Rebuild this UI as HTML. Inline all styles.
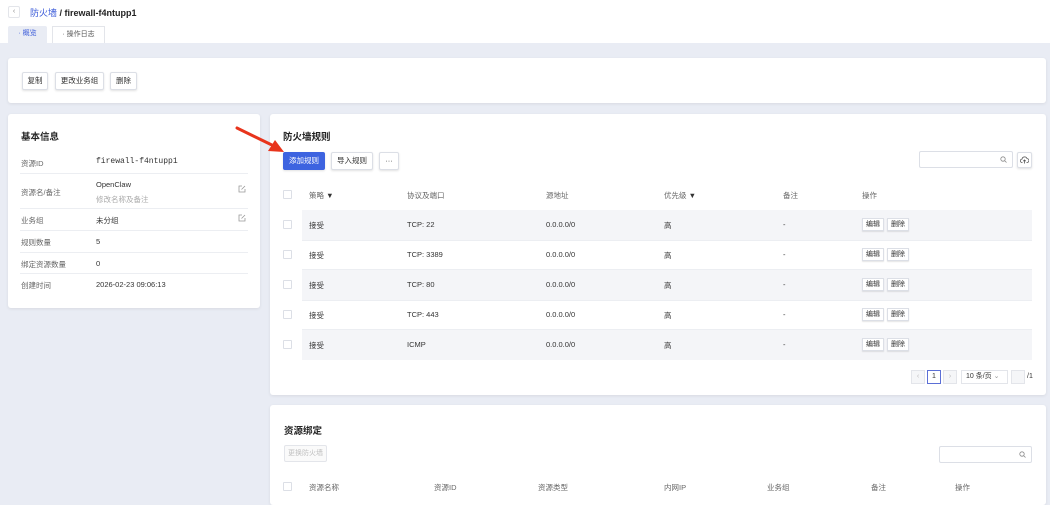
<!DOCTYPE html>
<html><head><meta charset="utf-8"><style>
*{box-sizing:border-box;margin:0;padding:0}
body{width:1050px;height:500px;overflow:hidden;background:#e9ecf4;font-family:"Liberation Sans","Noto Sans CJK SC",sans-serif;font-size:7.5px;color:#333;position:relative}
.a{position:absolute}
.card{position:absolute;background:#fff;border-radius:3px;box-shadow:0 1px 3px rgba(0,0,0,.08)}
.btn{position:absolute;height:18px;border:1px solid #dcdfe6;background:#fff;border-radius:2px;font-size:7.5px;line-height:16px;text-align:center;box-shadow:0 1px 2px rgba(0,0,0,.12);color:#333}
.t{position:absolute;white-space:nowrap}
.cb{position:absolute;width:9px;height:9px;border:1px solid #dcdfe6;background:#fff;border-radius:1px}
.row{position:absolute;left:302px;width:730px;height:30px}
.g{background:#f4f5f8}
.sm{position:absolute;height:13px;padding:0 3px;border:1px solid #dcdfe6;background:#fff;font-size:7px;line-height:11px;box-shadow:0 1px 1px rgba(0,0,0,.1)}
.lbl{color:#666}
.hr{position:absolute;left:20px;width:228px;height:1px;background:#eceef2}
</style></head><body>
<div class="a" style="left:0;top:0;width:1050px;height:43px;background:#fff"></div>
<div class="a" style="left:8px;top:6px;width:12px;height:12px;border:1px solid #e3e5ea;border-radius:2px;font-size:7px;line-height:10px;text-align:center;color:#888">‹</div>
<div class="t" style="left:30px;top:6px;font-size:9px"><span style="color:#3b5bd9">防火墙</span> <b style="color:#222">/ firewall-f4ntupp1</b></div>
<div class="a" style="left:8px;top:26px;width:39px;height:17px;background:#e9ecf4;border-radius:2px 2px 0 0;font-size:7px;line-height:16px;text-align:center;color:#3b5bd9">· 概览</div>
<div class="a" style="left:52px;top:26px;width:53px;height:17px;background:#fff;border:1px solid #e3e5ea;border-bottom:none;font-size:7px;line-height:15px;text-align:center;color:#555">· 操作日志</div>

<div class="card" style="left:8px;top:58px;width:1038px;height:45px"></div>
<div class="btn" style="left:22px;top:72px;width:26px">复制</div>
<div class="btn" style="left:55px;top:72px;width:49px">更改业务组</div>
<div class="btn" style="left:110px;top:72px;width:27px">删除</div>

<div class="card" style="left:8px;top:114px;width:252px;height:194px"></div>
<div class="t" style="left:21px;top:129px;font-size:9.5px;font-weight:bold;color:#222">基本信息</div>
<div class="t lbl" style="left:21px;top:158px">资源ID</div><div class="t" style="left:96px;top:157px;font-family:'Liberation Mono',monospace;font-size:8px">firewall-f4ntupp1</div>
<div class="hr" style="top:173px"></div>
<div class="t lbl" style="left:21px;top:187px">资源名/备注</div><div class="t" style="left:96px;top:180px">OpenClaw</div><div class="t" style="left:96px;top:194px;color:#aaa">修改名称及备注</div>
<svg class="a" style="left:238px;top:185px" width="8" height="8" viewBox="0 0 8 8"><path d="M4 1H1v6h6V4M3.5 4.5L7 1" fill="none" stroke="#999" stroke-width=".8"/></svg>
<div class="hr" style="top:208px"></div>
<div class="t lbl" style="left:21px;top:215px">业务组</div><div class="t" style="left:96px;top:215px">未分组</div>
<svg class="a" style="left:238px;top:214px" width="8" height="8" viewBox="0 0 8 8"><path d="M4 1H1v6h6V4M3.5 4.5L7 1" fill="none" stroke="#999" stroke-width=".8"/></svg>
<div class="hr" style="top:230px"></div>
<div class="t lbl" style="left:21px;top:237px">规则数量</div><div class="t" style="left:96px;top:237px">5</div>
<div class="hr" style="top:252px"></div>
<div class="t lbl" style="left:21px;top:259px">绑定资源数量</div><div class="t" style="left:96px;top:259px">0</div>
<div class="hr" style="top:273px"></div>
<div class="t lbl" style="left:21px;top:280px">创建时间</div><div class="t" style="left:96px;top:280px">2026-02-23 09:06:13</div>

<div class="card" style="left:270px;top:114px;width:776px;height:281px"></div>
<div class="t" style="left:283px;top:129px;font-size:9.5px;font-weight:bold;color:#222">防火墙规则</div>
<div class="btn" style="left:283px;top:152px;width:42px;background:#3d63e0;border-color:#3d63e0;color:#fff">添加规则</div>
<div class="btn" style="left:331px;top:152px;width:42px">导入规则</div>
<div class="btn" style="left:379px;top:152px;width:20px">···</div>
<div class="a" style="left:919px;top:151px;width:94px;height:17px;border:1px solid #dcdfe6;border-radius:2px"></div>
<svg class="a" style="left:1000px;top:156px" width="7" height="7" viewBox="0 0 7 7"><circle cx="3" cy="3" r="2.2" fill="none" stroke="#888" stroke-width=".8"/><path d="M4.6 4.6L6.5 6.5" stroke="#888" stroke-width=".8"/></svg>
<div class="btn" style="left:1017px;top:152px;width:15px;height:16px"></div>
<svg class="a" style="left:1020px;top:156px" width="9" height="8" viewBox="0 0 9 8"><path d="M2.5 6.5H2a1.7 1.7 0 010-3.4A2.6 2.6 0 017 2.6a1.9 1.9 0 010 3.9h-.5M4.5 7.5V4M3.3 5.2L4.5 4l1.2 1.2" fill="none" stroke="#555" stroke-width=".8"/></svg>

<div class="cb" style="left:283px;top:190px"></div>
<div class="t lbl" style="left:309px;top:190px">策略 <b style="color:#333">▼</b></div>
<div class="t lbl" style="left:407px;top:190px">协议及端口</div>
<div class="t lbl" style="left:546px;top:190px">源地址</div>
<div class="t lbl" style="left:664px;top:190px">优先级 <b style="color:#333">▼</b></div>
<div class="t lbl" style="left:783px;top:190px">备注</div>
<div class="t lbl" style="left:862px;top:190px">操作</div>

<div class="row g" style="top:210px"></div>
<div class="row" style="top:240px;border-top:1px solid #eceef2;border-bottom:1px solid #eceef2"></div>
<div class="row g" style="top:270px"></div>
<div class="row" style="top:300px;border-top:1px solid #eceef2;border-bottom:1px solid #eceef2"></div>
<div class="row g" style="top:330px"></div>

<div class="cb" style="left:283px;top:220px"></div><div class="t" style="left:309px;top:220px">接受</div><div class="t" style="left:407px;top:220px">TCP: 22</div><div class="t" style="left:546px;top:220px">0.0.0.0/0</div><div class="t" style="left:664px;top:220px">高</div><div class="t" style="left:783px;top:220px">-</div><div class="sm" style="left:862px;top:218px">编辑</div><div class="sm" style="left:887px;top:218px">删除</div>
<div class="cb" style="left:283px;top:250px"></div><div class="t" style="left:309px;top:250px">接受</div><div class="t" style="left:407px;top:250px">TCP: 3389</div><div class="t" style="left:546px;top:250px">0.0.0.0/0</div><div class="t" style="left:664px;top:250px">高</div><div class="t" style="left:783px;top:250px">-</div><div class="sm" style="left:862px;top:248px">编辑</div><div class="sm" style="left:887px;top:248px">删除</div>
<div class="cb" style="left:283px;top:280px"></div><div class="t" style="left:309px;top:280px">接受</div><div class="t" style="left:407px;top:280px">TCP: 80</div><div class="t" style="left:546px;top:280px">0.0.0.0/0</div><div class="t" style="left:664px;top:280px">高</div><div class="t" style="left:783px;top:280px">-</div><div class="sm" style="left:862px;top:278px">编辑</div><div class="sm" style="left:887px;top:278px">删除</div>
<div class="cb" style="left:283px;top:310px"></div><div class="t" style="left:309px;top:310px">接受</div><div class="t" style="left:407px;top:310px">TCP: 443</div><div class="t" style="left:546px;top:310px">0.0.0.0/0</div><div class="t" style="left:664px;top:310px">高</div><div class="t" style="left:783px;top:310px">-</div><div class="sm" style="left:862px;top:308px">编辑</div><div class="sm" style="left:887px;top:308px">删除</div>
<div class="cb" style="left:283px;top:340px"></div><div class="t" style="left:309px;top:340px">接受</div><div class="t" style="left:407px;top:340px">ICMP</div><div class="t" style="left:546px;top:340px">0.0.0.0/0</div><div class="t" style="left:664px;top:340px">高</div><div class="t" style="left:783px;top:340px">-</div><div class="sm" style="left:862px;top:338px">编辑</div><div class="sm" style="left:887px;top:338px">删除</div>

<div class="a" style="left:911px;top:370px;width:14px;height:14px;border:1px solid #e3e5ea;background:#f5f6f8;font-size:7px;line-height:12px;text-align:center;color:#bbb">‹</div>
<div class="a" style="left:927px;top:370px;width:14px;height:14px;border:1px solid #5b6fd6;font-size:7px;line-height:12px;text-align:center">1</div>
<div class="a" style="left:943px;top:370px;width:14px;height:14px;border:1px solid #e3e5ea;background:#f5f6f8;font-size:7px;line-height:12px;text-align:center;color:#bbb">›</div>
<div class="a" style="left:961px;top:370px;width:47px;height:14px;border:1px solid #e3e5ea;font-size:7px;line-height:12px;padding-left:4px">10 条/页 <span style="color:#999">⌄</span></div>
<div class="a" style="left:1011px;top:370px;width:14px;height:14px;border:1px solid #e3e5ea;background:#f5f6f8"></div>
<div class="t" style="left:1027px;top:373px;font-size:7px">/1</div>

<div class="card" style="left:270px;top:405px;width:776px;height:100px"></div>
<div class="t" style="left:284px;top:423px;font-size:9.5px;font-weight:bold;color:#222">资源绑定</div>
<div class="a" style="left:284px;top:445px;width:43px;height:17px;border:1px solid #e3e5ea;border-radius:2px;background:#fafafa;color:#c0c0c0;font-size:7px;line-height:15px;text-align:center">更换防火墙</div>
<div class="a" style="left:939px;top:446px;width:93px;height:17px;border:1px solid #dcdfe6;border-radius:2px"></div>
<svg class="a" style="left:1019px;top:451px" width="7" height="7" viewBox="0 0 7 7"><circle cx="3" cy="3" r="2.2" fill="none" stroke="#888" stroke-width=".8"/><path d="M4.6 4.6L6.5 6.5" stroke="#888" stroke-width=".8"/></svg>
<div class="cb" style="left:283px;top:482px"></div>
<div class="t lbl" style="left:309px;top:482px">资源名称</div>
<div class="t lbl" style="left:434px;top:482px">资源ID</div>
<div class="t lbl" style="left:538px;top:482px">资源类型</div>
<div class="t lbl" style="left:664px;top:482px">内网IP</div>
<div class="t lbl" style="left:767px;top:482px">业务组</div>
<div class="t lbl" style="left:871px;top:482px">备注</div>
<div class="t lbl" style="left:955px;top:482px">操作</div>

<svg class="a" style="left:230px;top:120px" width="60" height="40"><line x1="7" y1="8" x2="46" y2="27" stroke="#e8341c" stroke-width="3" stroke-linecap="round"/><polygon points="54,32 38,31 45,20" fill="#e8341c"/></svg>
</body></html>
